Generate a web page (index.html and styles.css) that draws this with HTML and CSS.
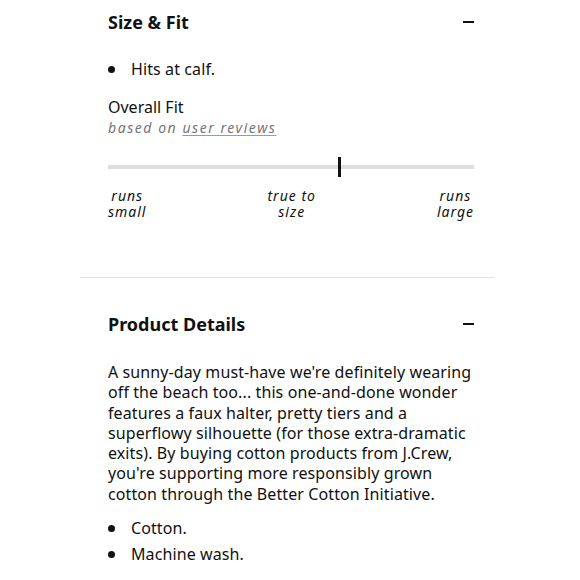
FILE: index.html
```html
<!DOCTYPE html>
<html lang="en">
<head>
<meta charset="utf-8">
<title>Product info</title>
<link rel="stylesheet" href="styles.css">
</head>
<body>
<div class="panel">
  <section class="section section-fit">
    <div class="section-head">
      <h2 class="section-title">Size &amp; Fit</h2>
      <span class="toggle" aria-label="collapse"></span>
    </div>
    <ul class="bullets">
      <li>Hits at calf.</li>
    </ul>
    <div class="fit">
      <div class="fit-title">Overall Fit</div>
      <div class="fit-sub">based on <a class="fit-link" href="#">user reviews</a></div>
      <div class="track">
        <span class="marker" style="left: 63%"></span>
      </div>
      <div class="fit-labels">
        <div class="fit-label"><span class="fit-line">runs</span><span class="fit-line">small</span></div>
        <div class="fit-label"><span class="fit-line">true to</span><span class="fit-line">size</span></div>
        <div class="fit-label"><span class="fit-line">runs</span><span class="fit-line">large</span></div>
      </div>
    </div>
  </section>
  <section class="section section-details">
    <div class="section-head">
      <h2 class="section-title">Product Details</h2>
      <span class="toggle" aria-label="collapse"></span>
    </div>
    <p class="desc">A sunny-day must-have we're definitely wearing off the beach too... this one-and-done wonder features a faux halter, pretty tiers and a superflowy silhouette (for those extra-dramatic exits). By buying cotton products from J.Crew, you're supporting more responsibly grown cotton through the Better Cotton Initiative.</p>
    <ul class="bullets bullets-details">
      <li>Cotton.</li>
      <li>Machine wash.</li>
    </ul>
  </section>
</div>
</body>
</html>
```

FILE: styles.css
```css
html, body {
  margin: 0;
  padding: 0;
  background: #ffffff;
}

body {
  font-family: "Noto Sans", "Open Sans", sans-serif;
  color: #111111;
}

.panel {
  margin-left: 80px;
  width: 414px;
}

.section {
  padding: 0 20px 0 28px;
}

.section-fit {
  padding-top: 10px;
  padding-bottom: 58px;
  border-bottom: 1px solid #e2e2e2;
}

.section-details {
  padding-top: 34px;
}

.section-head {
  display: flex;
  align-items: center;
  justify-content: space-between;
  height: 24px;
}

.section-title {
  margin: 0;
  font-size: 18px;
  line-height: 24px;
  font-weight: 700;
}

.toggle {
  display: block;
  width: 11px;
  height: 2px;
  background: #111111;
}

.bullets {
  list-style: none;
  margin: 22px 0 0;
  padding: 0;
}

.bullets li {
  display: flex;
  align-items: center;
  font-size: 16px;
  line-height: 26px;
  letter-spacing: 0.1px;
}

.bullets li::before {
  content: "";
  display: block;
  width: 7px;
  height: 7px;
  border-radius: 50%;
  background: #111111;
  margin-right: 16px;
}

.fit {
  margin-top: 14px;
}

.fit-title {
  font-size: 16px;
  line-height: 22px;
}

.fit-sub {
  font-size: 14px;
  line-height: 20px;
  font-style: italic;
  letter-spacing: 1.55px;
  color: #767676;
}

.fit-link {
  color: #767676;
  text-decoration: underline;
  text-decoration-color: #9a9a9a;
  text-underline-offset: 2px;
}

.track {
  position: relative;
  margin-top: 27px;
  height: 4px;
  background: #dedede;
}

.marker {
  position: absolute;
  top: -8px;
  width: 3px;
  height: 20px;
  margin-left: -1px;
  background: #111111;
}

.fit-labels {
  display: flex;
  justify-content: space-between;
  margin-top: 19px;
}

.fit-label {
  display: flex;
  flex-direction: column;
  align-items: center;
  font-size: 14px;
  font-style: italic;
  letter-spacing: 1px;
  color: #111111;
}

.fit-line {
  display: block;
  line-height: 15.5px;
}

.desc {
  margin: 26px 0 0;
  font-size: 16px;
  line-height: 20.3px;
  letter-spacing: 0.1px;
}

.bullets-details {
  margin-top: 11px;
}
```
